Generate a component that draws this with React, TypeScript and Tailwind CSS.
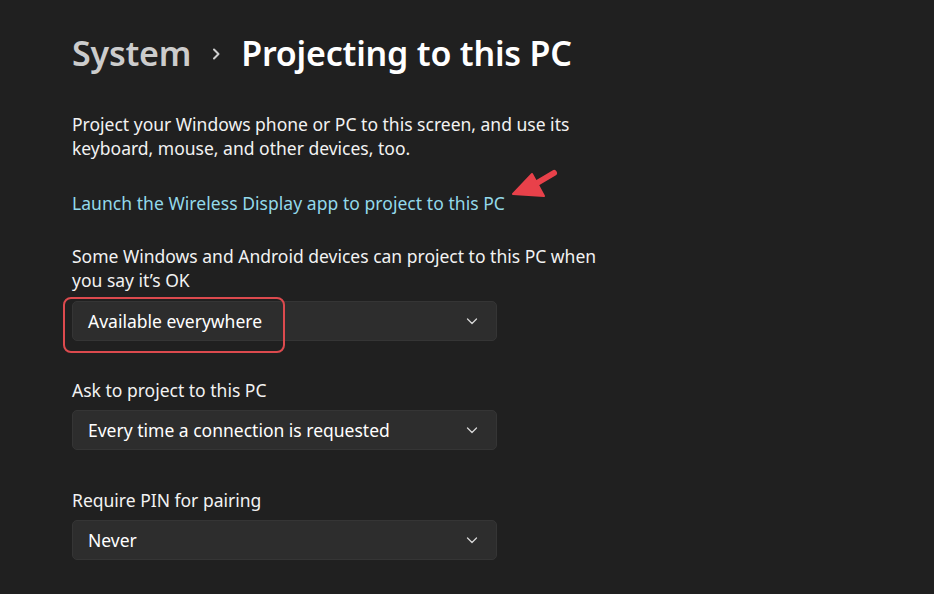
import React from 'react';

const font = { fontFamily: '"Noto Sans", "Open Sans", Arial, sans-serif' };

const Chevron = () => (
    <svg width="12" height="8" viewBox="0 0 12 8" fill="none" stroke="#d6d6d6" strokeWidth={1.3} strokeLinecap="round" strokeLinejoin="round">
        <path d="M1.5 2l4.5 4.5 4.5-4.5" />
    </svg>
);

const Dropdown = ({ value, highlight }: { value: string; highlight?: boolean }) => (
    <div className="relative w-[425px]">
        <div className="h-10 flex items-center justify-between pl-[15px] pr-[18px] bg-[#2d2d2d] border border-[#353535] rounded-[5px] text-[17.5px] text-white">
            <span>{value}</span>
            <Chevron />
        </div>
        {highlight && (
            <div className="absolute left-[-9px] top-[-4px] w-[222px] h-[56px] border-2 border-[#dc4a4e] rounded-[8px]" />
        )}
    </div>
);

export default function App() {
    return (
        <div className="w-[934px] h-[594px] bg-[#202020] text-white overflow-hidden relative" style={font}>
            <div className="pl-[72px] pt-[30px]">
                <div className="flex items-center h-[46px] text-[34px] leading-[46px] font-semibold tracking-[-0.2px]">
                    <span className="text-[#cccccc]">System</span>
                    <svg className="mx-[20px] mt-[2px]" width="10" height="14" viewBox="0 0 10 14" fill="none" stroke="#cfcfcf" strokeWidth={2} strokeLinecap="round" strokeLinejoin="round">
                        <path d="M3 2.5l4.5 4.5L3 11.5" />
                    </svg>
                    <span className="text-white">Projecting to this PC</span>
                </div>

                <p className="mt-[36px] text-[17.5px] leading-[24px] text-[#f2f2f2] whitespace-nowrap">
                    Project your Windows phone or PC to this screen, and use its<br />
                    keyboard, mouse, and other devices, too.
                </p>

                <div className="mt-[31px] text-[17.5px] leading-[24px] text-[#93d9ea] tracking-[0.05px]">
                    Launch the Wireless Display app to project to this PC
                </div>

                <p className="mt-[29px] text-[17.5px] leading-[24px] text-[#f2f2f2] whitespace-nowrap">
                    Some Windows and Android devices can project to this PC when<br />
                    you say it&rsquo;s OK
                </p>
                <div className="mt-[9px]">
                    <Dropdown value="Available everywhere" highlight />
                </div>

                <div className="mt-[37px] text-[17.5px] leading-[24px] text-[#f2f2f2]">Ask to project to this PC</div>
                <div className="mt-[8px]">
                    <Dropdown value="Every time a connection is requested" />
                </div>

                <div className="mt-[38px] text-[17.5px] leading-[24px] text-[#f2f2f2]">Require PIN for pairing</div>
                <div className="mt-[8px]">
                    <Dropdown value="Never" />
                </div>
            </div>

            {/* red annotation arrow */}
            <svg className="absolute left-[502px] top-[161px]" width="70" height="45" viewBox="0 0 70 45">
                <path d="M52 12 L30 25" stroke="#e8414a" strokeWidth={6} strokeLinecap="round" />
                <path d="M11 33 L30 13 L42 35 Z" fill="#e8414a" stroke="#e8414a" strokeWidth={2} strokeLinejoin="round" />
            </svg>
        </div>
    );
}
